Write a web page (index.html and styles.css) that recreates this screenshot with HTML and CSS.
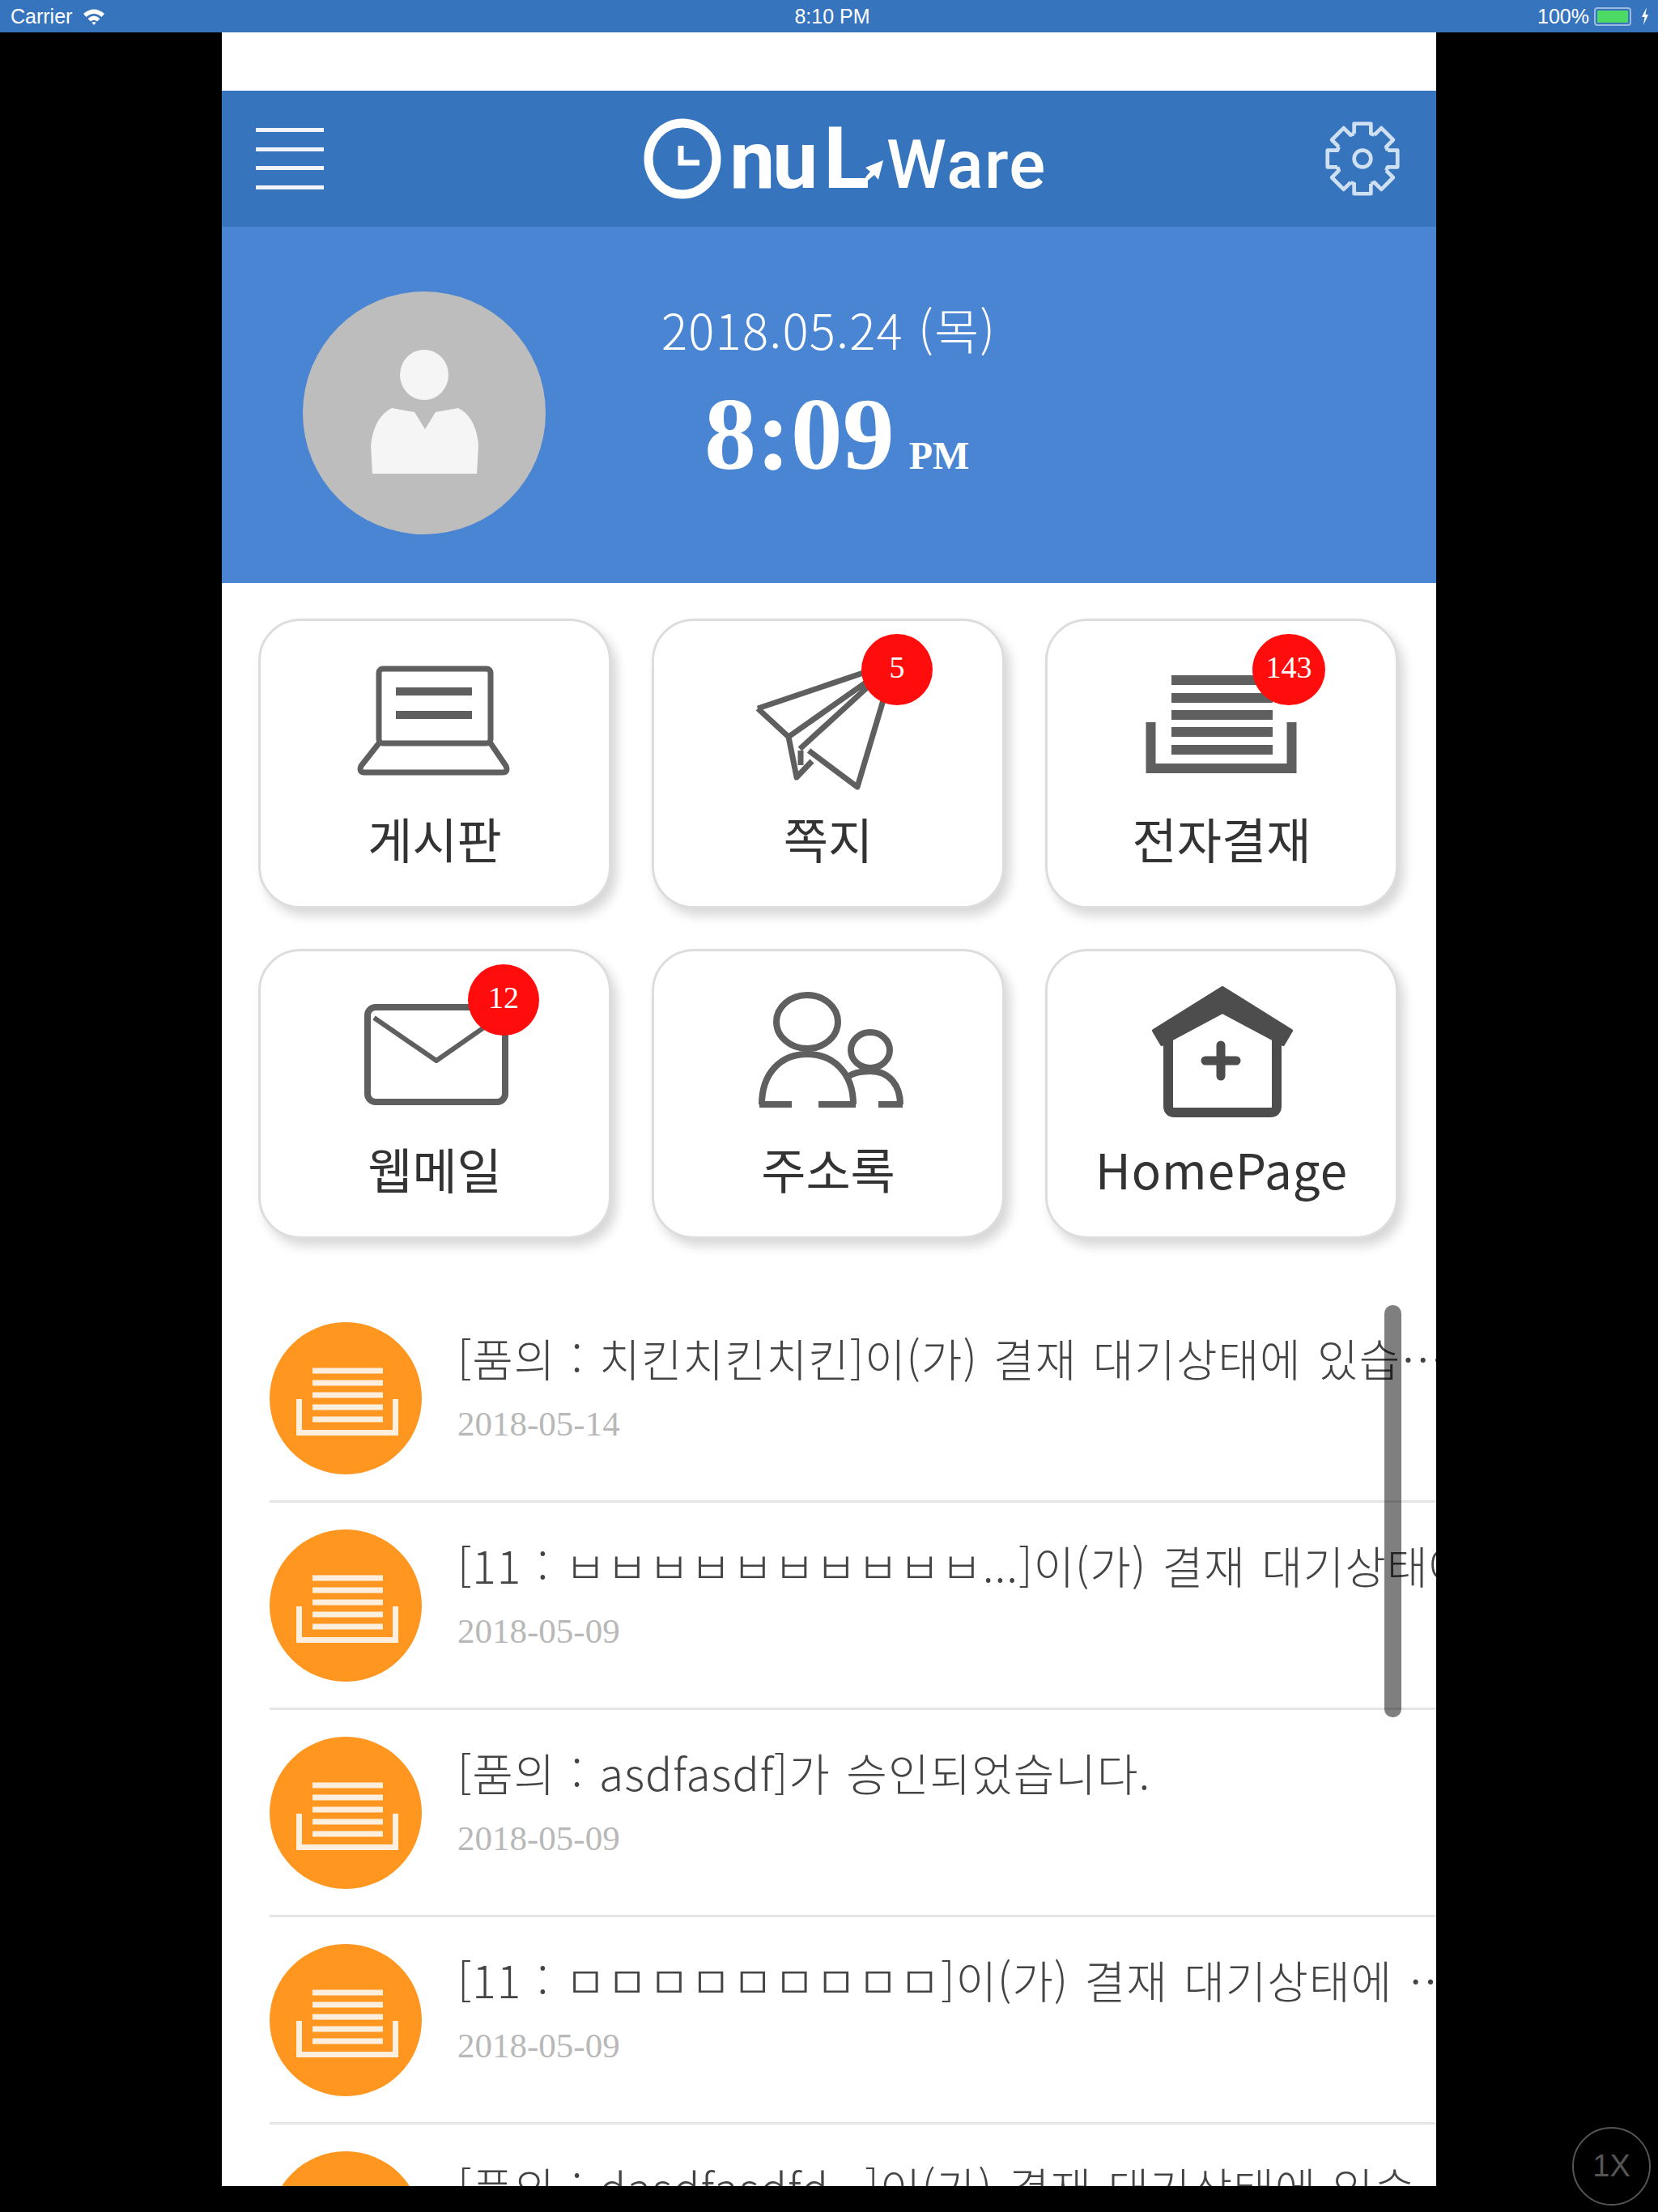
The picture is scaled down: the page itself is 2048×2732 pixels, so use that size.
FILE: index.html
```html
<!DOCTYPE html>
<html lang="ko">
<head>
    <meta charset="UTF-8">
    <meta name="viewport" content="width=device-width, initial-scale=1.0">
    <title>OnulWare</title>
    <link rel="stylesheet" href="styles.css">
</head>
<body>
    <div class="status-bar">
        <div class="status-left">
            <span>Carrier</span>
            <svg class="wifi" viewBox="0 0 30 22" width="30" height="22">
                <path d="M2 8 Q15 -3 28 8 L24.5 12 Q15 4 5.5 12 Z"/>
                <path d="M7.5 14 Q15 7 22.5 14 L19 17.5 Q15 14 11 17.5 Z"/>
                <path d="M12.5 19 Q15 17 17.5 19 L15 22 Z"/>
            </svg>
        </div>
        <div class="status-time">8:10 PM</div>
        <div class="status-right">
            <span>100%</span>
            <div class="battery"><div class="battery-level"></div></div>
            <svg class="bolt" viewBox="0 0 10 22" width="10" height="22"><path d="M7 0 L1 12 H4.500 L3 22 L9 9 H5.500 Z"/></svg>
        </div>
    </div>

    <div class="app">
        <div class="top-space"></div>

        <div class="header">
            <div class="hamburger">
                <span></span><span></span><span></span><span></span>
            </div>
            <div class="logo">
                <svg class="logo-clock" viewBox="0 0 96 100" width="96" height="100">
                    <ellipse cx="48" cy="50" rx="42" ry="44" fill="none" stroke="#fff" stroke-width="11"/>
                    <path d="M46 34 V55 H69" fill="none" stroke="#fff" stroke-width="7"/>
                </svg>
                <span class="logo-nu">nu</span>
                <span class="logo-l">L</span>
                <svg class="logo-arrow" viewBox="0 0 30 34" width="30" height="34"><path d="M0 34 Q8 20 14 14 L8 9 L30 0 L24 24 L19 18 Q12 24 0 34 Z" fill="#fff"/></svg>
                <span class="logo-ware">Ware</span>
            </div>
            <svg class="gear" viewBox="-50 -50 100 100" width="94" height="94">
                <g fill="none" stroke="#cfe0f2" stroke-width="5" stroke-linejoin="round">
                    <path id="gearTooth" d="M-11 -33 L-11 -46 H11 L11 -33 A34.800 34.800 0 0 1 15.560 -31.100"/>
                    <use href="#gearTooth" transform="rotate(45)"/>
                    <use href="#gearTooth" transform="rotate(90)"/>
                    <use href="#gearTooth" transform="rotate(135)"/>
                    <use href="#gearTooth" transform="rotate(180)"/>
                    <use href="#gearTooth" transform="rotate(225)"/>
                    <use href="#gearTooth" transform="rotate(270)"/>
                    <use href="#gearTooth" transform="rotate(315)"/>
                    <circle r="11"/>
                </g>
            </svg>
        </div>

        <div class="hero">
            <svg class="avatar" viewBox="0 0 300 300" width="300" height="300">
                <circle cx="150" cy="150" r="150" fill="#bdbdbd"/>
                <ellipse cx="150" cy="103" rx="30" ry="31" fill="#f5f5f5"/>
                <path d="M86 225 L84 190 Q88 155 110 144 L138 149 L151 170 L164 149 L192 144 Q214 155 217 190 L215 225 Z" fill="#f5f5f5"/>
            </svg>
            <div class="hero-info">
                <div class="hero-date">2018.05.24 (목)</div>
                <div class="hero-time">8:09<span class="hero-ampm">PM</span></div>
            </div>
        </div>

        <div class="menu">
            <div class="menu-card">
                <svg class="menu-icon" viewBox="0 0 427 215">
                    <g fill="none" stroke="#5f5f5f" stroke-width="7" stroke-linejoin="round">
                        <rect x="145" y="58" width="138" height="92" rx="5"/>
                        <path d="M145 150 L123 178 Q120 186 127 186 H298 Q305 186 302 178 L283 150"/>
                        <path d="M166 86 H260 M166 115 H260" stroke-width="10"/>
                    </g>
                </svg>
                <div class="menu-label">게시판</div>
            </div>
            <div class="menu-card">
                <svg class="menu-icon" viewBox="0 0 427 215">
                    <g fill="none" stroke="#5f5f5f" stroke-width="7" stroke-linejoin="round">
                        <path d="M127 107 L296 50 L250 204 L190 159"/>
                        <path d="M127 107 L165 142 L296 50 M165 142 L175 192 L194 172 M179 157 L296 50 M180 159 V177"/>
                    </g>
                </svg>
                <div class="menu-label">쪽지</div>
                <div class="badge">5</div>
            </div>
            <div class="menu-card">
                <svg class="menu-icon" viewBox="0 0 427 215">
                    <g fill="none" stroke="#5f5f5f" stroke-width="12">
                        <path d="M126.500 124 V181 H300.500 V124"/>
                        <path d="M152 72 H277 M152 94 H277 M152 115 H277 M152 136 H277 M152 158 H277"/>
                    </g>
                </svg>
                <div class="menu-label">전자결재</div>
                <div class="badge badge-wide">143</div>
            </div>
            <div class="menu-card">
                <svg class="menu-icon" viewBox="0 0 427 215">
                    <g fill="none" stroke="#5f5f5f" stroke-linejoin="round">
                        <rect x="131" y="68" width="170" height="117" rx="10" stroke-width="8"/>
                        <path d="M139 81 L216 134 L302 74" stroke-width="6"/>
                    </g>
                </svg>
                <div class="menu-label">웹메일</div>
                <div class="badge">12</div>
            </div>
            <div class="menu-card">
                <svg class="menu-icon" viewBox="0 0 427 215">
                    <g fill="none" stroke="#5f5f5f" stroke-width="8">
                        <ellipse cx="188" cy="86" rx="38" ry="33"/>
                        <path d="M132 188 C132 150 155 126 188 126 C221 126 245 150 245 188"/>
                        <path d="M129 188 H169 M202 188 H248 M276 188 H306"/>
                        <ellipse cx="266" cy="121" rx="24" ry="22"/>
                        <path d="M238 154 C245 149 255 147 266 147 C290 147 303 165 303 188"/>
                    </g>
                </svg>
                <div class="menu-label">주소록</div>
            </div>
            <div class="menu-card">
                <svg class="menu-icon" viewBox="0 0 427 215">
                    <path d="M215 44 L300 97 L290 114 L215 74 L140 114 L130 97 Z" fill="#4d4d4d" stroke="#4d4d4d" stroke-width="4" stroke-linejoin="round"/>
                    <path d="M148 100 V190 Q148 198 156 198 H274 Q282 198 282 190 V100" fill="none" stroke="#4d4d4d" stroke-width="12"/>
                    <path d="M213 115 V153 M194 134 H232" fill="none" stroke="#4d4d4d" stroke-width="11" stroke-linecap="round"/>
                </svg>
                <div class="menu-label menu-label-en">HomePage</div>
            </div>
        </div>

        <svg class="defs" width="0" height="0">
            <symbol id="docIcon" viewBox="0 0 188 188">
                <g fill="none" stroke="#fdeedd" stroke-width="7">
                    <path d="M36.500 95 V136.500 H155.500 V95"/>
                    <path d="M53 60 H140 M53 75 H140 M53 90 H140 M53 105 H140 M53 120 H140"/>
                </g>
            </symbol>
        </svg>

        <div class="list">
            <div class="list-item">
                <div class="list-icon"><svg viewBox="0 0 188 188" width="188" height="188"><use href="#docIcon"/></svg></div>
                <div class="list-body">
                    <div class="list-title">[품의 : 치킨치킨치킨]이(가) 결재 대기상태에 있습…</div>
                    <div class="list-date">2018-05-14</div>
                </div>
            </div>
            <div class="list-item">
                <div class="list-icon"><svg viewBox="0 0 188 188" width="188" height="188"><use href="#docIcon"/></svg></div>
                <div class="list-body">
                    <div class="list-title">[11 : ㅂㅂㅂㅂㅂㅂㅂㅂㅂㅂ...]이(가) 결재 대기상태에 있습니다.</div>
                    <div class="list-date">2018-05-09</div>
                </div>
            </div>
            <div class="list-item">
                <div class="list-icon"><svg viewBox="0 0 188 188" width="188" height="188"><use href="#docIcon"/></svg></div>
                <div class="list-body">
                    <div class="list-title">[품의 : asdfasdf]가 승인되었습니다.</div>
                    <div class="list-date">2018-05-09</div>
                </div>
            </div>
            <div class="list-item">
                <div class="list-icon"><svg viewBox="0 0 188 188" width="188" height="188"><use href="#docIcon"/></svg></div>
                <div class="list-body">
                    <div class="list-title">[11 : ㅁㅁㅁㅁㅁㅁㅁㅁㅁ]이(가) 결재 대기상태에 …</div>
                    <div class="list-date">2018-05-09</div>
                </div>
            </div>
            <div class="list-item">
                <div class="list-icon"><svg viewBox="0 0 188 188" width="188" height="188"><use href="#docIcon"/></svg></div>
                <div class="list-body">
                    <div class="list-title">[품의 : dasdfasdfd...]이(가) 결재 대기상태에 있습…</div>
                    <div class="list-date">2018-05-09</div>
                </div>
            </div>
        </div>

        <div class="scrollbar"></div>
    </div>

    <div class="scale-btn">1X</div>
</body>
</html>
```

FILE: styles.css
```css
* {
    margin: 0;
    padding: 0;
    box-sizing: border-box;
}

body {
    font-family: "Noto Sans CJK KR", "Noto Sans", sans-serif;
    background: #000;
    width: 2048px;
    height: 2732px;
    overflow: hidden;
    position: relative;
}

.status-bar {
    height: 40px;
    background: #3674be;
    color: #fff;
    display: grid;
    grid-template-columns: 1fr auto 1fr;
    align-items: center;
    padding: 0 11px 0 13px;
    font-family: "Liberation Sans", sans-serif;
    font-size: 25px;
}

.status-left {
    display: flex;
    align-items: center;
    gap: 12px;
}

.status-time {
    margin-left: 6px;
}

.wifi {
    fill: #fff;
}

.status-right {
    display: flex;
    align-items: center;
    justify-content: flex-end;
    gap: 6px;
}

.battery {
    width: 46px;
    height: 23px;
    border: 2px solid rgba(255, 255, 255, 0.5);
    border-radius: 4px;
    padding: 2px;
}

.battery-level {
    height: 100%;
    background: #4cd964;
    border-radius: 1px;
}

.bolt {
    fill: #fff;
    margin-left: 6px;
}

.app {
    position: relative;
    width: 1500px;
    height: 2660px;
    margin: 0 auto;
    background: #fff;
    overflow: hidden;
}

.top-space {
    height: 72px;
}

.header {
    height: 168px;
    background: #3674be;
    display: flex;
    align-items: center;
    justify-content: space-between;
    padding: 0 44px 0 42px;
}

.hamburger {
    width: 84px;
    height: 76px;
    display: flex;
    flex-direction: column;
    justify-content: space-between;
}

.hamburger span {
    height: 5px;
    background: #f0f4fa;
}

.logo {
    display: flex;
    align-items: baseline;
    color: #fff;
    font-family: Roboto, sans-serif;
    font-weight: 700;
    margin-left: 52px;
}

.logo-clock {
    align-self: center;
}

.logo-nu {
    font-size: 100px;
    letter-spacing: -3px;
    margin-left: 10px;
}

.logo-l {
    font-size: 105px;
    margin-left: 10px;
}

.logo-arrow {
    margin-left: -13px;
    margin-bottom: 4px;
}

.logo-ware {
    font-size: 84px;
    font-weight: 500;
    letter-spacing: 1.5px;
    margin-left: 4px;
}

.hero {
    height: 440px;
    background: #4985d2;
    display: flex;
    align-items: flex-start;
    padding-left: 100px;
}

.avatar {
    margin-top: 80px;
}

.hero-info {
    margin-top: 84px;
    margin-left: 143px;
    color: #fff;
}

.hero-date {
    font-size: 60px;
    font-weight: 300;
    letter-spacing: 1.2px;
    line-height: 84px;
}

.hero-time {
    font-family: "Liberation Serif", serif;
    font-weight: 700;
    font-size: 128px;
    line-height: 150px;
    margin-left: 53px;
    margin-top: 13px;
}

.hero-ampm {
    font-size: 48px;
    margin-left: 18px;
}

.menu {
    display: grid;
    grid-template-columns: repeat(3, 436px);
    grid-auto-rows: 358px;
    column-gap: 50px;
    row-gap: 50px;
    padding: 44px 0 0 45px;
}

.menu-card {
    position: relative;
    background: #fff;
    border: 3px solid #ddd;
    border-radius: 52px;
    padding: 1px 1px 0;
    box-shadow: 7px 9px 14px rgba(0, 0, 0, 0.16);
}

.menu-icon {
    display: block;
    width: 427px;
    height: 215px;
}

.menu-label {
    margin-top: 12px;
    line-height: 80px;
    font-size: 60px;
    color: #333;
    text-align: center;
}

.menu-label-en {
    letter-spacing: 1px;
}

.badge {
    position: absolute;
    left: 256px;
    top: 16px;
    width: 88px;
    height: 88px;
    border-radius: 50%;
    background: #ff0d0d;
    color: #fff;
    font-family: "Liberation Serif", serif;
    font-size: 38px;
    line-height: 82px;
    text-align: center;
}

.badge-wide {
    left: 253px;
    width: 90px;
}

.defs {
    position: absolute;
}

.list {
    padding: 70px 0 0 59px;
}

.list-item {
    display: flex;
    height: 256px;
    padding: 33px 0 32px;
    border-bottom: 3px solid #e5e5e5;
}

.list-icon {
    flex: none;
    width: 188px;
    height: 188px;
    border-radius: 50%;
    background: #ff9620;
}

.list-body {
    margin-left: 44px;
    min-width: 0;
    flex: 1;
    overflow: hidden;
}

.list-title {
    font-size: 55px;
    font-weight: 300;
    letter-spacing: 1px;
    word-spacing: 3px;
    line-height: 76px;
    color: #444;
    white-space: nowrap;
    margin-top: 5px;
}

.list-date {
    font-family: "Liberation Serif", serif;
    font-size: 43px;
    line-height: 50px;
    color: #b8b8b8;
    margin-top: 20px;
}

.scrollbar {
    position: absolute;
    right: 43px;
    top: 1572px;
    width: 21px;
    height: 509px;
    border-radius: 10px;
    background: rgba(0, 0, 0, 0.5);
}

.scale-btn {
    position: absolute;
    left: 1942px;
    top: 2627px;
    width: 97px;
    height: 97px;
    border: 2px solid #555;
    border-radius: 50%;
    color: #555;
    font-family: "Liberation Sans", sans-serif;
    font-size: 38px;
    line-height: 93px;
    text-align: center;
}
```
